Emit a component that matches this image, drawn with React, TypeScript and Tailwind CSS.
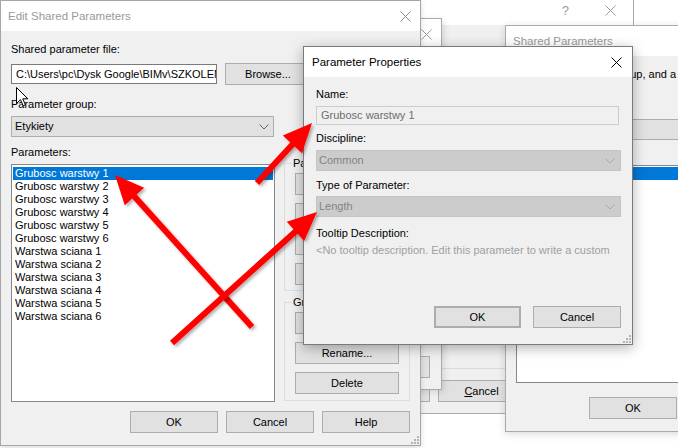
import React from "react";

const XIcon = ({ color }: { color: string }) => (
  <svg width="11" height="11" viewBox="0 0 11 11">
    <path d="M0.5 0.5 L10.5 10.5 M10.5 0.5 L0.5 10.5" stroke={color} strokeWidth="1" fill="none" />
  </svg>
);

const Chevron = ({ color }: { color: string }) => (
  <svg width="10" height="6" viewBox="0 0 10 6">
    <path d="M0.5 0.5 L5 5 L9.5 0.5" stroke={color} strokeWidth="1" fill="none" />
  </svg>
);

const Grip = () => (
  <svg width="9" height="9" viewBox="0 0 9 9" className="absolute right-[1px] bottom-[1px]">
    <rect x="7" y="1" width="2" height="2" fill="#b4b4b4" />
    <rect x="4" y="4" width="2" height="2" fill="#b4b4b4" />
    <rect x="7" y="4" width="2" height="2" fill="#b4b4b4" />
    <rect x="1" y="7" width="2" height="2" fill="#b4b4b4" />
    <rect x="4" y="7" width="2" height="2" fill="#b4b4b4" />
    <rect x="7" y="7" width="2" height="2" fill="#b4b4b4" />
  </svg>
);

const Btn = ({ children, className = "" }: { children?: React.ReactNode; className?: string }) => (
  <div
    className={`h-[22px] shrink-0 flex items-center justify-center bg-[#e1e1e1] border border-[#adadad] ${className}`}
  >
    {children}
  </div>
);

const Arrow = ({ x1, y1, x2, y2 }: { x1: number; y1: number; x2: number; y2: number }) => {
  const dx = x2 - x1;
  const dy = y2 - y1;
  const len = Math.hypot(dx, dy);
  const ux = dx / len;
  const uy = dy / len;
  const hl = 29;
  const hw = 13;
  const bx = x2 - ux * hl;
  const by = y2 - uy * hl;
  const px = -uy;
  const py = ux;
  return (
    <g filter="url(#shadow)">
      <line x1={x1} y1={y1} x2={bx + ux * 3} y2={by + uy * 3} stroke="#ff0000" strokeWidth="6" />
      <polygon
        points={`${x2},${y2} ${bx + px * hw},${by + py * hw} ${bx - px * hw},${by - py * hw}`}
        fill="#ff0000"
      />
    </g>
  );
};

const params = [
  "Grubosc warstwy 1",
  "Grubosc warstwy 2",
  "Grubosc warstwy 3",
  "Grubosc warstwy 4",
  "Grubosc warstwy 5",
  "Grubosc warstwy 6",
  "Warstwa sciana 1",
  "Warstwa sciana 2",
  "Warstwa sciana 3",
  "Warstwa sciana 4",
  "Warstwa sciana 5",
  "Warstwa sciana 6",
];

export default function App() {
  return (
    <div className="relative w-[678px] h-[448px] overflow-hidden bg-white font-['Liberation_Sans',Arial,sans-serif] text-[11px] leading-[15px] text-black">
      {/* back dialog with help button */}
      <div className="absolute left-[250px] top-[-6px] w-[384px] h-[420px] border border-[#aaaaaa] bg-[#f0f0f0] flex flex-col">
        <div className="h-[30px] shrink-0 bg-white flex items-center justify-end gap-[36px] pr-[17px]">
          <span className="text-[13px] text-[#9a9a9a]">?</span>
          <XIcon color="#9a9a9a" />
        </div>
        <div className="flex-1 flex flex-col justify-end">
          <div className="border-t border-[#dadada]" />
          <div className="flex justify-end gap-[8px] pt-[11px] pb-[11px] pr-[13px]">
            <Btn className="w-[87px]">OK</Btn>
            <Btn className="w-[87px]">
              <span>
                <span className="underline">C</span>ancel
              </span>
            </Btn>
            <Btn className="w-[87px]">Help</Btn>
          </div>
        </div>
      </div>

      {/* second back dialog */}
      <div className="absolute left-[240px] top-[18px] w-[202px] h-[372px] border border-[#aaaaaa] bg-[#f0f0f0] flex flex-col shadow-[2px_2px_6px_rgba(0,0,0,0.12)]">
        <div className="h-[30px] shrink-0 bg-white flex items-center justify-end pr-[9px]">
          <XIcon color="#9a9a9a" />
        </div>
        <div className="flex-1 flex flex-col justify-end items-end pr-[11px] pb-[11px]">
          <Btn className="w-[87px]">Cancel</Btn>
        </div>
      </div>

      {/* Shared Parameters */}
      <div className="absolute left-[505px] top-[25px] w-[300px] h-[407px] border border-[#aaaaaa] bg-[#f0f0f0] flex flex-col shadow-[0_2px_8px_rgba(0,0,0,0.15)]">
        <div className="h-[30px] shrink-0 bg-white flex items-center pl-[7px]">
          <span className="text-[11.5px] text-[#9a9a9a]">Shared Parameters</span>
        </div>
        <div className="flex-1 flex flex-col pl-[10px] pr-[10px]">
          <div className="mt-[11px] ml-[-5px] whitespace-nowrap">Choose a parameter group, and a parameter.</div>
          <div className="mt-[15px]">Parameter group:</div>
          <div className="mt-[7px] h-[21px] bg-[#e1e1e1] border border-[#adadad] flex items-center justify-between pl-[4px] pr-[8px]">
            <span>Etykiety</span>
            <Chevron color="#606060" />
          </div>
          <div className="mt-[5px]">Parameters:</div>
          <div className="mt-[5px] h-[218px] bg-white border border-[#828790] pt-[1px] px-[1px]">
            <div className="h-[13px] leading-[13px] bg-[#0078d7] text-white pl-[2px]">Grubosc warstwy 1</div>
          </div>
          <div className="mt-[14px] flex gap-[8px] ml-[73px]">
            <Btn className="w-[88px]">OK</Btn>
            <Btn className="w-[88px]">Cancel</Btn>
          </div>
        </div>
      </div>

      {/* Edit Shared Parameters */}
      <div className="absolute left-0 top-0 w-[421px] h-[446px] border border-[#a6a6a6] bg-[#f0f0f0] flex flex-col shadow-[0_2px_6px_rgba(0,0,0,0.15)]">
        <div className="h-[30px] shrink-0 bg-white flex items-center justify-between pl-[7px] pr-[9px]">
          <span className="text-[11.5px] text-[#9a9a9a]">Edit Shared Parameters</span>
          <XIcon color="#8a8a8a" />
        </div>
        <div className="flex-1 flex flex-col px-[10px]">
          <div className="mt-[11px]">Shared parameter file:</div>
          <div className="mt-[6px] h-[22px] flex items-center gap-[8px]">
            <div className="w-[206px] h-[20px] bg-white border border-[#7a7a7a] flex items-center pl-[4px] overflow-hidden whitespace-nowrap">
              C:\Users\pc\Dysk Google\BIMv\SZKOLENIA\Revit
            </div>
            <Btn className="w-[86px]">Browse...</Btn>
          </div>
          <div className="mt-[12px]">Parameter group:</div>
          <div className="mt-[4px] w-[263px] h-[21px] bg-[#e1e1e1] border border-[#adadad] flex items-center justify-between pl-[3px] pr-[4px]">
            <span>Etykiety</span>
            <Chevron color="#606060" />
          </div>
          <div className="mt-[8px]">Parameters:</div>
          <div className="flex gap-[9px]">
            <div className="mt-[4px] w-[264px] h-[238px] bg-white border border-[#828790] pt-[2px] pl-[1px] pr-[1px]">
              {params.map((p, i) => (
                <div
                  key={p}
                  className={`h-[13px] leading-[13px] pl-[2px] ${i === 0 ? "bg-[#0078d7] text-white" : "text-black"}`}
                >
                  {p}
                </div>
              ))}
            </div>
            <div className="w-[126px] flex flex-col">
              <div className="relative mt-[3px] h-[128px] border border-[#dcdcdc] px-[10px] pt-[9px] flex flex-col gap-[8px]">
                <span className="absolute left-[7px] top-[-8px] bg-[#f0f0f0] px-[1px]">Parameters</span>
                <Btn>New...</Btn>
                <Btn>Properties...</Btn>
                <Btn>Move...</Btn>
                <Btn>Delete</Btn>
              </div>
              <div className="relative mt-[11px] h-[99px] border border-[#dcdcdc] px-[10px] pt-[9px] flex flex-col gap-[8px]">
                <span className="absolute left-[7px] top-[-8px] bg-[#f0f0f0] px-[1px]">Groups</span>
                <Btn>New...</Btn>
                <Btn>Rename...</Btn>
                <Btn>Delete</Btn>
              </div>
            </div>
          </div>
          <div className="mt-[9px] flex justify-end gap-[8px]">
            <Btn className="w-[88px]">OK</Btn>
            <Btn className="w-[88px]">Cancel</Btn>
            <Btn className="w-[88px]">Help</Btn>
          </div>
        </div>
        <Grip />
      </div>

      {/* Parameter Properties */}
      <div className="absolute left-[303px] top-[46px] w-[330px] h-[299px] border border-[#7a7a7a] bg-[#f0f0f0] flex flex-col shadow-[0_3px_12px_rgba(0,0,0,0.3)]">
        <div className="h-[30px] shrink-0 bg-white flex items-center justify-between pl-[8px] pr-[10px]">
          <span className="text-[11.5px]">Parameter Properties</span>
          <XIcon color="#000000" />
        </div>
        <div className="flex-1 flex flex-col pl-[12px] pr-[11px] pb-[16px]">
          <div className="mt-[10px]">Name:</div>
          <div className="mt-[4px] w-[303px] h-[19px] bg-[#f0f0f0] border border-[#cccccc] flex items-center pl-[4px] text-[#6d6d6d]">
            Grubosc warstwy 1
          </div>
          <div className="mt-[6px]">Discipline:</div>
          <div className="mt-[4px] w-[305px] h-[21px] bg-[#cccccc] border border-[#c4c4c4] flex items-center justify-between pl-[2px] pr-[5px] text-[#838383]">
            <span>Common</span>
            <Chevron color="#a8a8a8" />
          </div>
          <div className="mt-[7px]">Type of Parameter:</div>
          <div className="mt-[3px] w-[305px] h-[21px] bg-[#cccccc] border border-[#c4c4c4] flex items-center justify-between pl-[2px] pr-[5px] text-[#838383]">
            <span>Length</span>
            <Chevron color="#a8a8a8" />
          </div>
          <div className="mt-[9px]">Tooltip Description:</div>
          <div className="mt-[2px] text-[#a0a0a0] whitespace-nowrap">
            &lt;No tooltip description. Edit this parameter to write a custom
          </div>
          <div className="mt-auto flex justify-end gap-[12px]">
            <Btn className="w-[87px] border-2 border-[#0078d7]">OK</Btn>
            <Btn className="w-[88px]">Cancel</Btn>
          </div>
        </div>
        <Grip />
      </div>

      {/* red arrows */}
      <svg className="absolute left-0 top-0 pointer-events-none" width="678" height="448" viewBox="0 0 678 448">
        <defs>
          <filter id="shadow" x="-20%" y="-20%" width="140%" height="140%">
            <feDropShadow dx="2" dy="2" stdDeviation="1.5" floodColor="#000" floodOpacity="0.3" />
          </filter>
        </defs>
        <Arrow x1={252} y1={327} x2={115} y2={175} />
        <Arrow x1={172} y1={343} x2={317} y2={212} />
        <Arrow x1={257} y1={183} x2={312} y2={123} />
      </svg>

      {/* mouse pointer */}
      <svg className="absolute left-[16px] top-[87px] pointer-events-none" width="13" height="20" viewBox="0 0 13 20">
        <path d="M0.5 0.5 L0.5 16.5 L4.5 12.7 L7.2 18.8 L9.4 17.8 L6.8 11.8 L11.8 11.8 Z" fill="#ffffff" stroke="#000000" strokeWidth="1" />
      </svg>
    </div>
  );
}
